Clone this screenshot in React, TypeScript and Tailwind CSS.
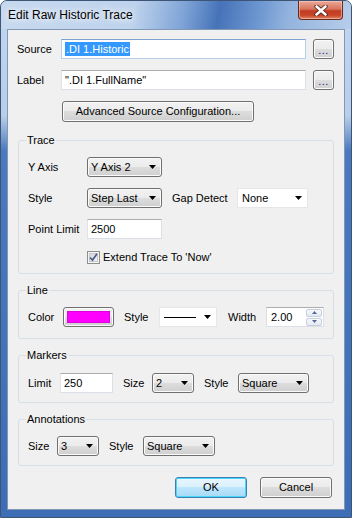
import React from 'react'

const btn =
  'rounded-[3px] border border-[#707070] bg-[linear-gradient(to_bottom,#f2f2f2_0%,#ebebeb_50%,#dddddd_50%,#cfcfcf_100%)] shadow-[inset_0_0_0_1px_#fbfbfb]'

function Arrow() {
  return (
    <svg width="7" height="4" viewBox="0 0 7 4" className="shrink-0">
      <path d="M0 0h7L3.5 4z" fill="#000" />
    </svg>
  )
}

function DropList({ value, w }: { value: string; w: string }) {
  return (
    <div className={`${btn} ${w} h-[20px] flex items-center pl-[3px] pr-[5px]`}>
      <span className="flex-1">{value}</span>
      <Arrow />
    </div>
  )
}

function TextBox({ value, w, focused }: { value: React.ReactNode; w: string; focused?: boolean }) {
  const border = focused
    ? 'border-[#b5cfe7] border-t-[#7da2ce]'
    : 'border-[#dbdfe6] border-t-[#abadb3] border-l-[#e2e3ea]'
  return (
    <div className={`${w} h-[20px] bg-white border ${border} flex items-center pl-[3px]`}>
      {value}
    </div>
  )
}

function Group({ title, children, className }: { title: string; children: React.ReactNode; className: string }) {
  return (
    <fieldset className={`w-[316px] rounded-[3px] border border-[#d5dfe5] pl-[9px] ${className}`}>
      <legend className="-ml-[2px] px-[1px] leading-[13px]">{title}</legend>
      {children}
    </fieldset>
  )
}

export default function App() {
  return (
    <div className="w-[352px] h-[518px] flex flex-col rounded-t-[7px] border border-[#3e5474] bg-[linear-gradient(180deg,#c2d6ee_0px,#b8cee9_115px,#4a79be_150px,#3d6db5_100%)] font-['Liberation_Sans',Arial,sans-serif] text-[11px] text-black overflow-hidden">
      {/* title bar */}
      <div className="h-[28px] flex items-start rounded-t-[6px] bg-[linear-gradient(100deg,#c6d9ef_0%,#bed3ec_38%,#7fa4d7_52%,#4673b8_62%,#7099d2_74%,#94b4de_82%,#b7cdea_100%)]">
        <span className="pl-[7px] pt-[7px] text-[12px] leading-[14px] [text-shadow:0_0_6px_#ffffff,0_0_10px_#ffffff]">
          Edit Raw Historic Trace
        </span>
        <div className="ml-auto mr-[8px] w-[45px] h-[19px] rounded-b-[4px] border border-t-0 border-[#6b2a20] bg-[linear-gradient(to_bottom,#e9ab9a_0%,#d9735d_45%,#c23b22_55%,#c9472b_80%,#dc8a66_100%)] shadow-[inset_0_0_0_1px_rgba(255,210,200,0.5)] flex items-center justify-center">
          <svg width="14" height="11" viewBox="0 0 14 11">
            <path d="M2.5 1.5l9 8M11.5 1.5l-9 8" stroke="#4a1d16" strokeWidth="4.2" strokeLinecap="round" />
            <path d="M2.5 1.5l9 8M11.5 1.5l-9 8" stroke="#ffffff" strokeWidth="2.6" strokeLinecap="round" />
          </svg>
        </div>
      </div>

      {/* client area */}
      <div className="flex-1 px-[6px] pb-[7px] flex">
        <div className="flex-1 border border-[#8197b3] bg-[#f0f0f0] flex flex-col">
          <div className="pl-[9px] pt-[9px] flex items-center">
            <span className="w-[44px]">Source</span>
            <TextBox
              w="w-[245px]"
              focused
              value={<span className="bg-[#3399ff] text-white px-[1px] leading-[14px]">.DI 1.Historic</span>}
            />
            <div className={`${btn} ml-[7px] w-[21px] h-[20px] flex items-end justify-center pb-[4px]`}>
              <span className="text-[#1b1b8f] leading-[8px] tracking-[0.5px]">...</span>
            </div>
          </div>
          <div className="pl-[9px] mt-[11px] flex items-center">
            <span className="w-[44px]">Label</span>
            <TextBox w="w-[245px]" value={'".DI 1.FullName"'} />
            <div className={`${btn} ml-[7px] w-[21px] h-[20px] flex items-end justify-center pb-[4px]`}>
              <span className="text-[#1b1b8f] leading-[8px] tracking-[0.5px]">...</span>
            </div>
          </div>
          <div className={`${btn} ml-[54px] mt-[11px] w-[192px] h-[21px] flex items-center justify-center`}>
            Advanced Source Configuration...
          </div>

          <div className="pl-[10px] mt-[12px] flex flex-col gap-[10px]">
            <Group title="Trace" className="pt-[10px] pb-[9px]">
              <div className="flex flex-col gap-[11px]">
                <div className="flex items-center">
                  <span className="w-[59px]">Y Axis</span>
                  <DropList value="Y Axis 2" w="w-[75px]" />
                </div>
                <div className="flex items-center">
                  <span className="w-[59px]">Style</span>
                  <DropList value="Step Last" w="w-[75px]" />
                  <span className="ml-[10px] w-[65px]">Gap Detect</span>
                  <div className="w-[71px] h-[20px] bg-white border border-[#e6e6e6] flex items-center pl-[4px] pr-[5px]">
                    <span className="flex-1">None</span>
                    <Arrow />
                  </div>
                </div>
                <div className="flex items-center">
                  <span className="w-[59px]">Point Limit</span>
                  <TextBox w="w-[75px]" value="2500" />
                </div>
                <div className="flex items-center pl-[59px] h-[14px]">
                  <svg width="13" height="13" viewBox="0 0 13 13">
                    <defs>
                      <linearGradient id="cb" x1="0" y1="0" x2="1" y2="1">
                        <stop offset="0" stopColor="#d4d4d4" />
                        <stop offset="1" stopColor="#f6f6f6" />
                      </linearGradient>
                    </defs>
                    <rect x="0.5" y="0.5" width="12" height="12" fill="#f4f4f4" stroke="#8e8f8f" />
                    <rect x="2.5" y="2.5" width="8" height="8" fill="url(#cb)" stroke="#c8c8c8" />
                    <path d="M3 6.5l2.5 2.6L10 2.8" fill="none" stroke="#4e5f8e" strokeWidth="1.8" />
                  </svg>
                  <span className="ml-[3px]">Extend Trace To 'Now'</span>
                </div>
              </div>
            </Group>

            <Group title="Line" className="pt-[10px] pb-[11px]">
              <div className="flex items-center">
                <span className="w-[35px]">Color</span>
                <div className={`${btn} w-[51px] h-[20px] p-[3px]`}>
                  <div className="w-full h-full bg-[#ff00ff] border border-[#e000e0]" />
                </div>
                <span className="ml-[10px] w-[35px]">Style</span>
                <div className="w-[58px] h-[20px] bg-white border border-[#e6e6e6] flex items-center pl-[4px] pr-[5px]">
                  <div className="w-[32px] h-px bg-black" />
                  <div className="flex-1" />
                  <Arrow />
                </div>
                <span className="ml-[11px] w-[38px]">Width</span>
                <div className="w-[58px] h-[20px] bg-white border border-[#dbdfe6] border-t-[#abadb3] flex items-center pl-[4px] pr-px">
                  <span className="flex-1">2.00</span>
                  <div className="w-[16px] h-[17px] flex flex-col gap-px">
                    <div className="flex-1 rounded-[2px] border border-[#c5cfdd] bg-[linear-gradient(to_bottom,#f7f9fb,#e4e9f1)] flex items-center justify-center">
                      <svg width="5" height="3" viewBox="0 0 5 3"><path d="M0 3h5L2.5 0z" fill="#56679a" /></svg>
                    </div>
                    <div className="flex-1 rounded-[2px] border border-[#c5cfdd] bg-[linear-gradient(to_bottom,#f7f9fb,#e4e9f1)] flex items-center justify-center">
                      <svg width="5" height="3" viewBox="0 0 5 3"><path d="M0 0h5L2.5 3z" fill="#56679a" /></svg>
                    </div>
                  </div>
                </div>
              </div>
            </Group>

            <Group title="Markers" className="pt-[11px] pb-[9px]">
              <div className="flex items-center">
                <span className="w-[32px]">Limit</span>
                <TextBox w="w-[53px]" value="250" />
                <span className="ml-[10px] w-[29px]">Size</span>
                <DropList value="2" w="w-[42px]" />
                <span className="ml-[10px] w-[34px]">Style</span>
                <DropList value="Square" w="w-[71px]" />
              </div>
            </Group>

            <Group title="Annotations" className="pt-[10px] pb-[9px]">
              <div className="flex items-center">
                <span className="w-[29px]">Size</span>
                <DropList value="3" w="w-[42px]" />
                <span className="ml-[10px] w-[34px]">Style</span>
                <DropList value="Square" w="w-[72px]" />
              </div>
            </Group>
          </div>

          <div className="mt-[11px] mr-[12px] flex justify-end gap-[13px]">
            <div className="w-[72px] h-[21px] rounded-[3px] border border-[#3c7fb1] bg-[linear-gradient(to_bottom,#eaf6fd_0%,#d9f0fc_50%,#bee6fd_50%,#a7d9f5_100%)] shadow-[inset_0_0_0_1px_#48d7fb] flex items-center justify-center">
              OK
            </div>
            <div className={`${btn} w-[72px] h-[21px] flex items-center justify-center`}>Cancel</div>
          </div>
        </div>
      </div>
    </div>
  )
}
